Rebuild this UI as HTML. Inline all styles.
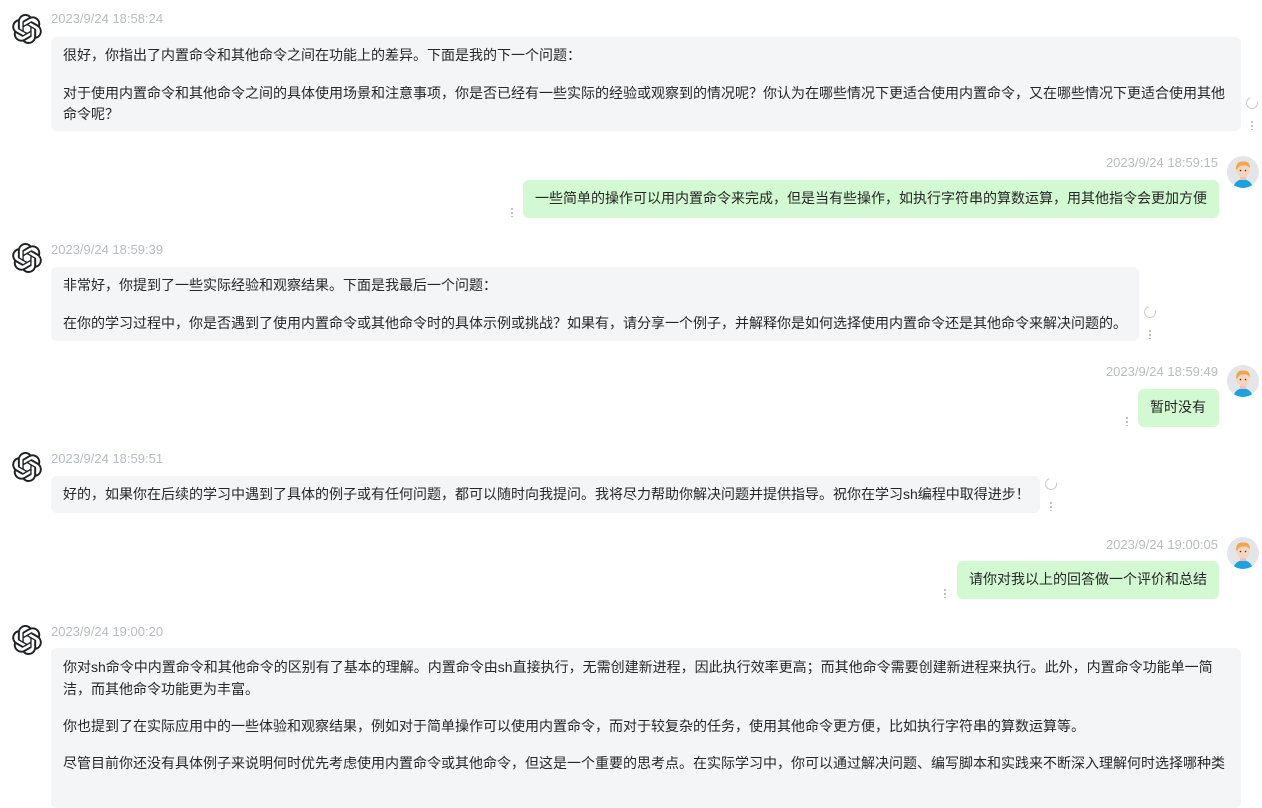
<!DOCTYPE html>
<html><head><meta charset="utf-8">
<style>
*{margin:0;padding:0;box-sizing:border-box}
body{width:1262px;height:773px;overflow:hidden;background:#fff;font-family:"Liberation Sans","Noto Sans CJK SC",sans-serif;color:#262626;position:relative}
.ts{position:absolute;font-size:13px;color:#b8bbc0;line-height:14px}
.b{position:absolute;border-radius:6px;font-size:14px;line-height:21px;padding:8px 12px;white-space:nowrap}
.g{background:#f4f5f7}
.u{background:#d2f9d1}
.b p+p{margin-top:17px}
.logo{position:absolute;width:30px;height:30px}
.av{position:absolute;width:32px;height:32px}
.rf{position:absolute;width:12px;height:12px;border:1.5px solid #c9c9c9;border-radius:50%;border-top-color:transparent;transform:rotate(30deg)}
.dt{position:absolute;width:2px;height:10px;background:radial-gradient(circle,#bbb 1px,transparent 1.2px) 0 0/2px 4px}
</style></head><body>
<svg width="0" height="0" style="position:absolute"><defs>
<symbol id="oa" viewBox="0 0 24 24"><path fill="#202123" d="M22.2819 9.8211a5.9847 5.9847 0 0 0-.5157-4.9108 6.0462 6.0462 0 0 0-6.5098-2.9A6.0651 6.0651 0 0 0 4.9807 4.1818a5.9847 5.9847 0 0 0-3.9977 2.9 6.0462 6.0462 0 0 0 .7427 7.0966 5.98 5.98 0 0 0 .511 4.9107 6.051 6.051 0 0 0 6.5146 2.9001A5.9847 5.9847 0 0 0 13.2599 24a6.0557 6.0557 0 0 0 5.7718-4.2058 5.9894 5.9894 0 0 0 3.9977-2.9001 6.0557 6.0557 0 0 0-.7475-7.0729zm-9.022 12.6081a4.4755 4.4755 0 0 1-2.8764-1.0408l.1419-.0804 4.7783-2.7582a.7948.7948 0 0 0 .3927-.6813v-6.7369l2.02 1.1686a.071.071 0 0 1 .038.052v5.5826a4.504 4.504 0 0 1-4.4945 4.4944zm-9.6607-4.1254a4.4708 4.4708 0 0 1-.5346-3.0137l.142.0852 4.783 2.7582a.7712.7712 0 0 0 .7806 0l5.8428-3.3685v2.3324a.0804.0804 0 0 1-.0332.0615L9.74 19.9502a4.4992 4.4992 0 0 1-6.1408-1.6464zM2.3408 7.8956a4.485 4.485 0 0 1 2.3655-1.9728V11.6a.7664.7664 0 0 0 .3879.6765l5.8144 3.3543-2.0201 1.1685a.0757.0757 0 0 1-.071 0l-4.8303-2.7865A4.504 4.504 0 0 1 2.3408 7.872zm16.5963 3.8558L13.1038 8.364 15.1192 7.2a.0757.0757 0 0 1 .071 0l4.8303 2.7913a4.4944 4.4944 0 0 1-.6765 8.1042v-5.6772a.79.79 0 0 0-.407-.667zm2.0107-3.0231l-.142-.0852-4.7735-2.7818a.7759.7759 0 0 0-.7854 0L9.409 9.2297V6.8974a.0662.0662 0 0 1 .0284-.0615l4.8303-2.7866a4.4992 4.4992 0 0 1 6.6802 4.66zM8.3065 12.863l-2.02-1.1638a.0804.0804 0 0 1-.038-.0567V6.0742a4.4992 4.4992 0 0 1 7.3757-3.4537l-.142.0805L8.704 5.459a.7948.7948 0 0 0-.3927.6813zm1.0976-2.3654l2.602-1.4998 2.6069 1.4998v2.9994l-2.5974 1.4997-2.6067-1.4997Z"/></symbol>
<symbol id="av" viewBox="0 0 32 32"><clipPath id="c"><circle cx="16" cy="16" r="16"/></clipPath><g clip-path="url(#c)"><rect width="32" height="32" fill="#e3e5e8"/><path d="M6 32 Q8 24 16 23 Q24 24 26 32Z" fill="#1aa3e0"/><rect x="13" y="18" width="6" height="6" fill="#f1c2a8"/><ellipse cx="16" cy="14" rx="6.5" ry="7.5" fill="#f6d4bf"/><path d="M9 13 Q9 5 16 5.5 Q23 5 23 12 Q20 9 16 9.5 Q12 9 10 14Z" fill="#f2a54a"/><circle cx="13.5" cy="14.5" r=".8" fill="#333"/><circle cx="18.5" cy="14.5" r=".8" fill="#333"/></g></symbol>
</defs></svg>

<svg class="logo" style="left:12px;top:14px"><use href="#oa"/></svg>
<div class="ts" style="left:51px;top:12px">2023/9/24 18:58:24</div>
<div class="b g" style="left:51px;top:37px;width:1190px;height:94px"><p>很好，你指出了内置命令和其他命令之间在功能上的差异。下面是我的下一个问题：</p><p>对于使用内置命令和其他命令之间的具体使用场景和注意事项，你是否已经有一些实际的经验或观察到的情况呢？你认为在哪些情况下更适合使用内置命令，又在哪些情况下更适合使用其他<br>命令呢？</p></div>
<div class="rf" style="left:1246px;top:97px"></div><div class="dt" style="left:1251px;top:120px"></div>

<svg class="av" style="left:1227px;top:156px"><use href="#av"/></svg>
<div class="ts" style="right:44px;top:156px">2023/9/24 18:59:15</div>
<div class="b u" style="left:523px;top:180px;width:696px;height:38px">一些简单的操作可以用内置命令来完成，但是当有些操作，如执行字符串的算数运算，用其他指令会更加方便</div>
<div class="dt" style="left:511px;top:207px"></div>

<svg class="logo" style="left:12px;top:243px"><use href="#oa"/></svg>
<div class="ts" style="left:51px;top:243px">2023/9/24 18:59:39</div>
<div class="b g" style="left:51px;top:267px;width:1088px;height:74px"><p>非常好，你提到了一些实际经验和观察结果。下面是我最后一个问题：</p><p>在你的学习过程中，你是否遇到了使用内置命令或其他命令时的具体示例或挑战？如果有，请分享一个例子，并解释你是如何选择使用内置命令还是其他命令来解决问题的。</p></div>
<div class="rf" style="left:1144px;top:306px"></div><div class="dt" style="left:1149px;top:329px"></div>

<svg class="av" style="left:1227px;top:365px"><use href="#av"/></svg>
<div class="ts" style="right:44px;top:365px">2023/9/24 18:59:49</div>
<div class="b u" style="left:1138px;top:389px;width:81px;height:38px">暂时没有</div>
<div class="dt" style="left:1126px;top:416px"></div>

<svg class="logo" style="left:12px;top:452px"><use href="#oa"/></svg>
<div class="ts" style="left:51px;top:452px">2023/9/24 18:59:51</div>
<div class="b g" style="left:51px;top:476px;width:989px;height:37px">好的，如果你在后续的学习中遇到了具体的例子或有任何问题，都可以随时向我提问。我将尽力帮助你解决问题并提供指导。祝你在学习sh编程中取得进步！</div>
<div class="rf" style="left:1045px;top:478px"></div><div class="dt" style="left:1050px;top:501px"></div>

<svg class="av" style="left:1227px;top:537px"><use href="#av"/></svg>
<div class="ts" style="right:44px;top:538px">2023/9/24 19:00:05</div>
<div class="b u" style="left:957px;top:561px;width:262px;height:38px">请你对我以上的回答做一个评价和总结</div>
<div class="dt" style="left:944px;top:588px"></div>

<svg class="logo" style="left:12px;top:625px"><use href="#oa"/></svg>
<div class="ts" style="left:51px;top:625px">2023/9/24 19:00:20</div>
<div class="b g" style="left:51px;top:648px;width:1190px;height:160px;line-height:22px"><p>你对sh命令中内置命令和其他命令的区别有了基本的理解。内置命令由sh直接执行，无需创建新进程，因此执行效率更高；而其他命令需要创建新进程来执行。此外，内置命令功能单一简<br>洁，而其他命令功能更为丰富。</p><p style="margin-top:15px">你也提到了在实际应用中的一些体验和观察结果，例如对于简单操作可以使用内置命令，而对于较复杂的任务，使用其他命令更方便，比如执行字符串的算数运算等。</p><p style="margin-top:15px">尽管目前你还没有具体例子来说明何时优先考虑使用内置命令或其他命令，但这是一个重要的思考点。在实际学习中，你可以通过解决问题、编写脚本和实践来不断深入理解何时选择哪种类</p></div>
</body></html>
